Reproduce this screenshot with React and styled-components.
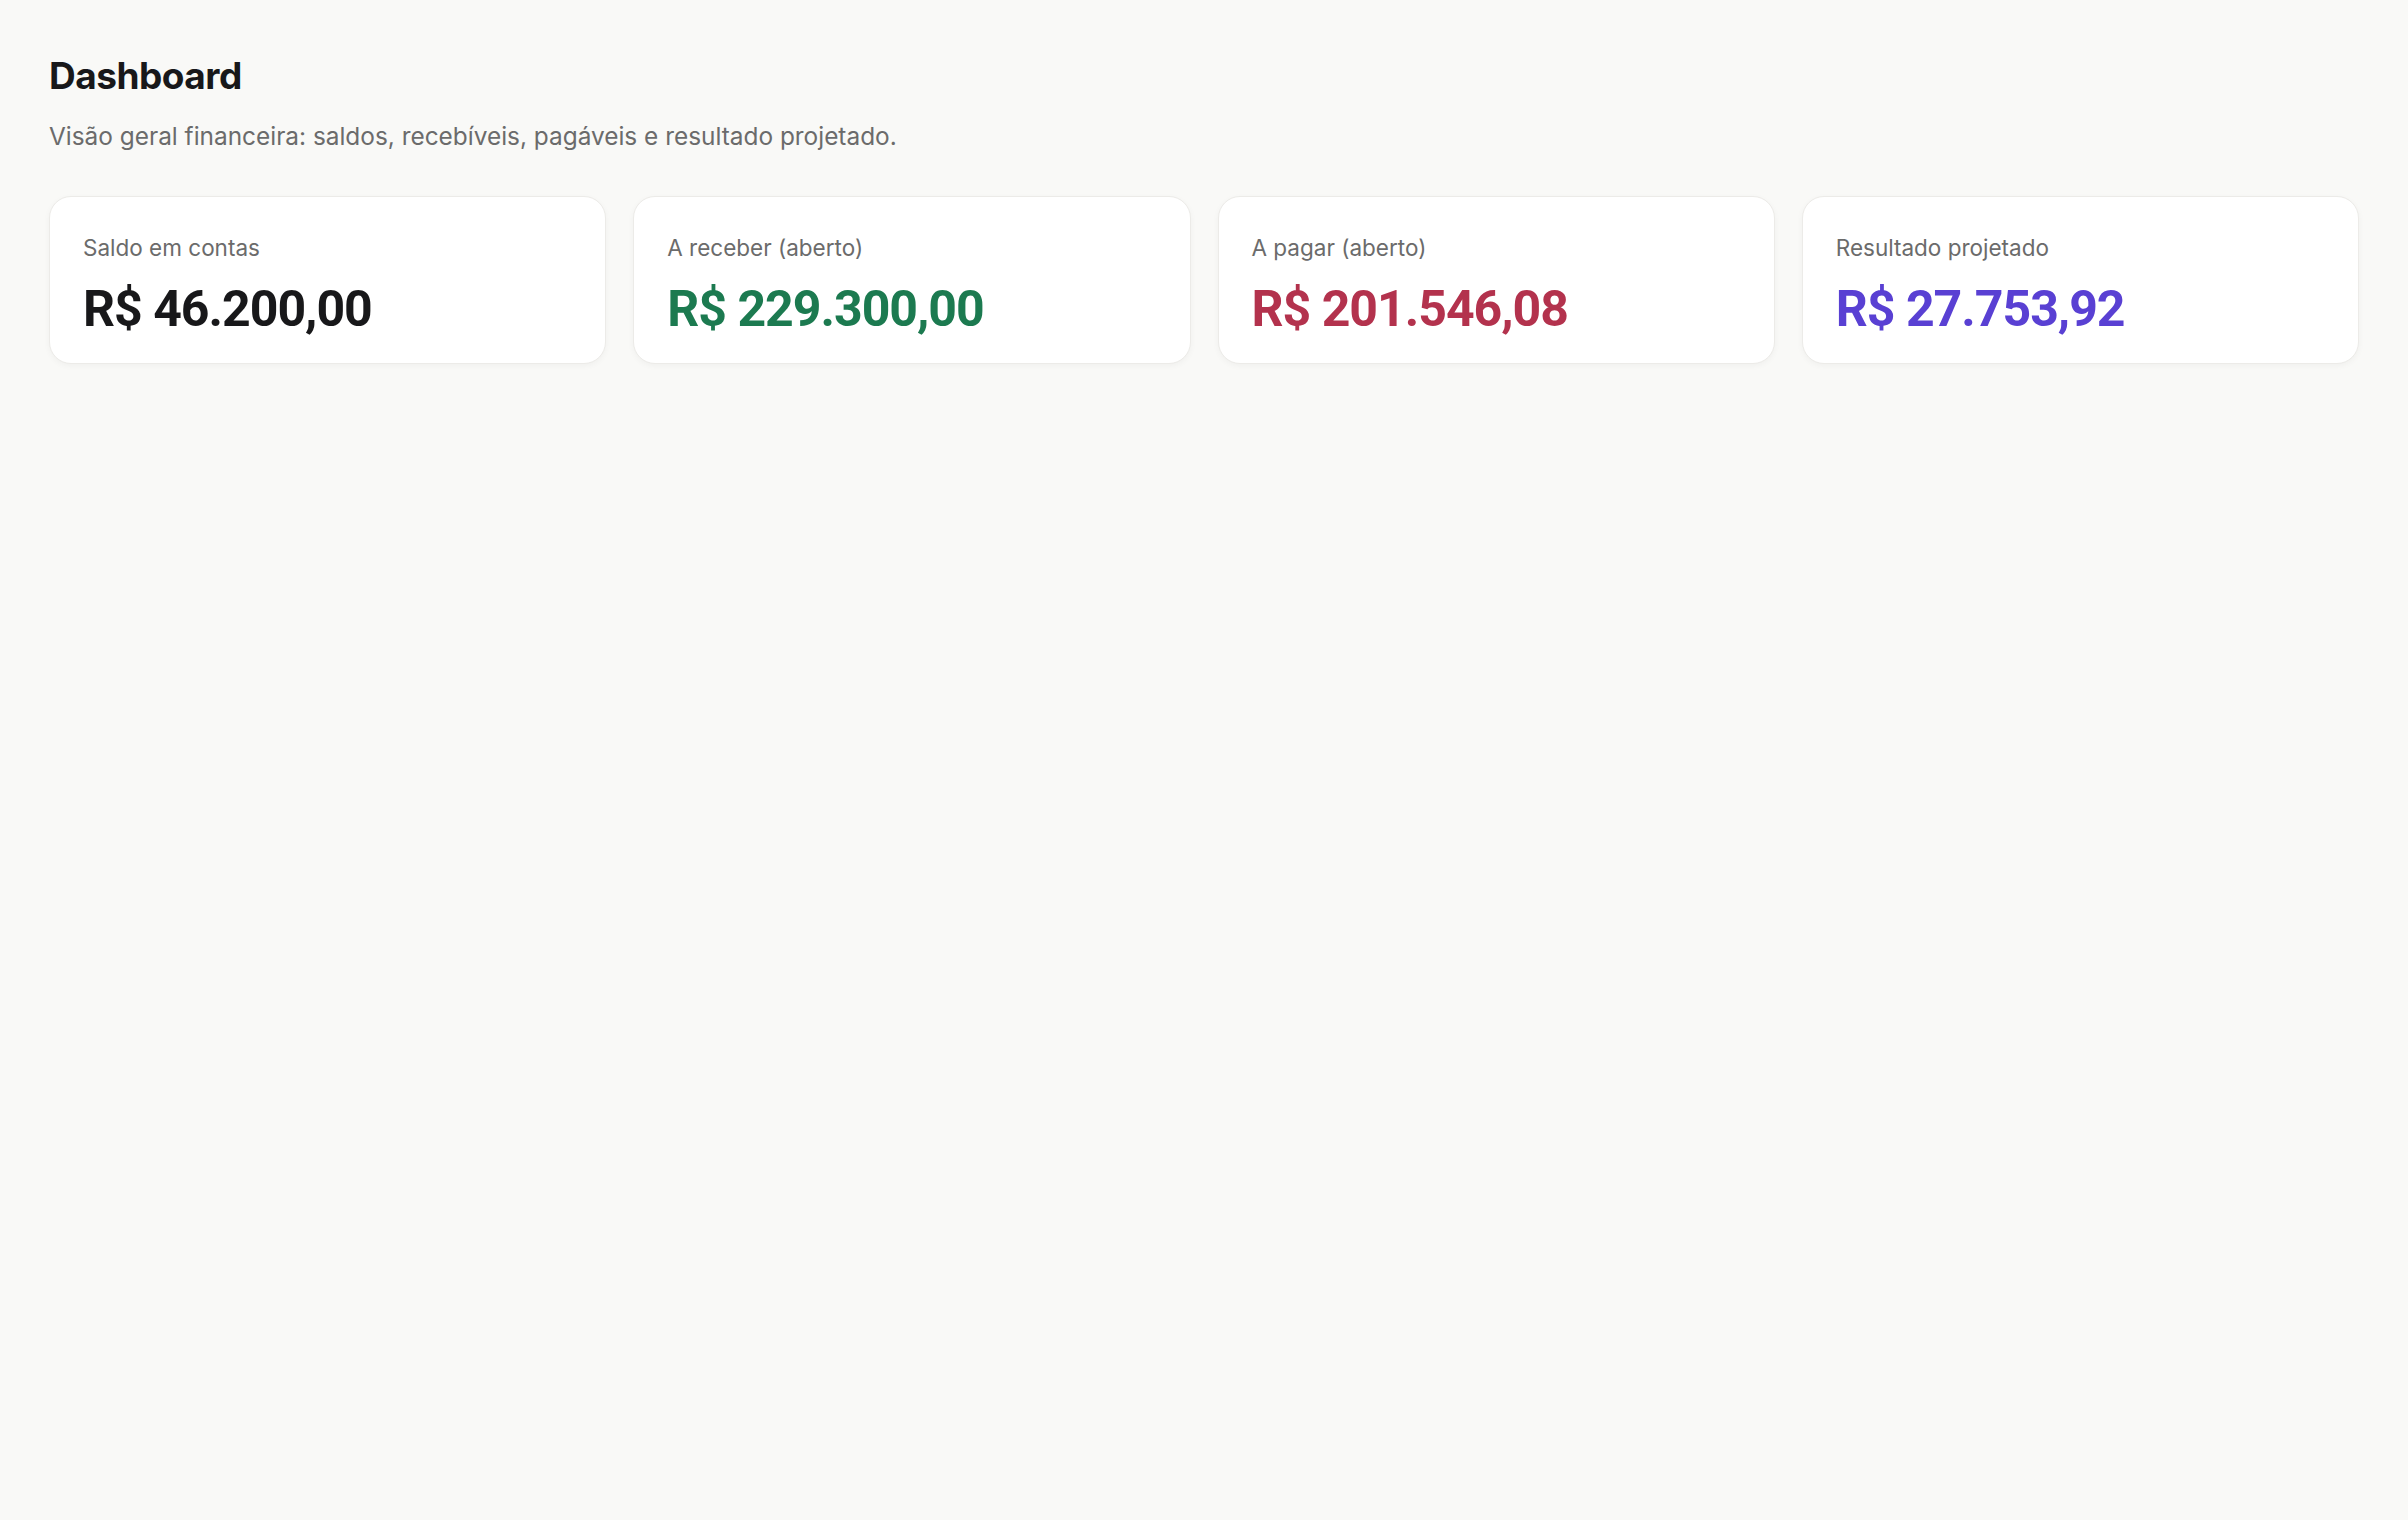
import styled, { createGlobalStyle } from 'styled-components';

const GlobalStyle = createGlobalStyle`
  html, body {
    margin: 0;
    padding: 0;
    background: #f9f9f7;
  }
  body {
    font-family: Inter, "Noto Sans", "Liberation Sans", sans-serif;
    color: #18181a;
  }
`;

const cards = [
  { label: 'Saldo em contas', value: 'R$ 46.200,00', tone: 'neutral' },
  { label: 'A receber (aberto)', value: 'R$ 229.300,00', tone: 'positive' },
  { label: 'A pagar (aberto)', value: 'R$ 201.546,08', tone: 'negative' },
  { label: 'Resultado projetado', value: 'R$ 27.753,92', tone: 'accent' },
];

const toneColors = {
  neutral: '#18181a',
  positive: '#1c7a50',
  negative: '#b3324d',
  accent: '#5940d3',
};

export default function App() {
  return (
    <>
      <GlobalStyle />
      <Page>
        <Header>
          <Title>Dashboard</Title>
          <Subtitle>Visão geral financeira: saldos, recebíveis, pagáveis e resultado projetado.</Subtitle>
        </Header>
        <CardGrid>
          {cards.map((c) => (
            <Card key={c.label}>
              <Label>{c.label}</Label>
              <Value tone={c.tone}>{c.value}</Value>
            </Card>
          ))}
        </CardGrid>
      </Page>
    </>
  );
}

const Page = styled.main`
  min-height: 1520px;
  box-sizing: border-box;
  padding: 52px 49px;
`;

const Header = styled.header`
  display: flex;
  flex-direction: column;
  gap: 20px;
  margin-bottom: 44px;
`;

const Title = styled.h1`
  margin: 0;
  font-size: 37px;
  line-height: 48px;
  font-weight: 700;
  letter-spacing: -0.5px;
  color: #18181a;
`;

const Subtitle = styled.p`
  margin: 0;
  font-size: 24.4px;
  line-height: 32px;
  color: #6b6b6b;
`;

const CardGrid = styled.section`
  display: grid;
  grid-template-columns: repeat(4, 1fr);
  gap: 27px;
`;

const Card = styled.div`
  background: #ffffff;
  border: 1.5px solid #ecebe8;
  border-radius: 22px;
  box-shadow: 0 2px 6px rgba(0, 0, 0, 0.04);
  padding: 35px 33px 25px;
  display: flex;
  flex-direction: column;
  gap: 16px;
`;

const Label = styled.div`
  font-size: 22.5px;
  line-height: 32px;
  color: #6b6b6b;
`;

const Value = styled.div`
  font-family: Roboto, "Liberation Sans", sans-serif;
  font-size: 50px;
  line-height: 58px;
  font-weight: 700;
  letter-spacing: -1px;
  color: ${(p) => toneColors[p.tone]};
`;
